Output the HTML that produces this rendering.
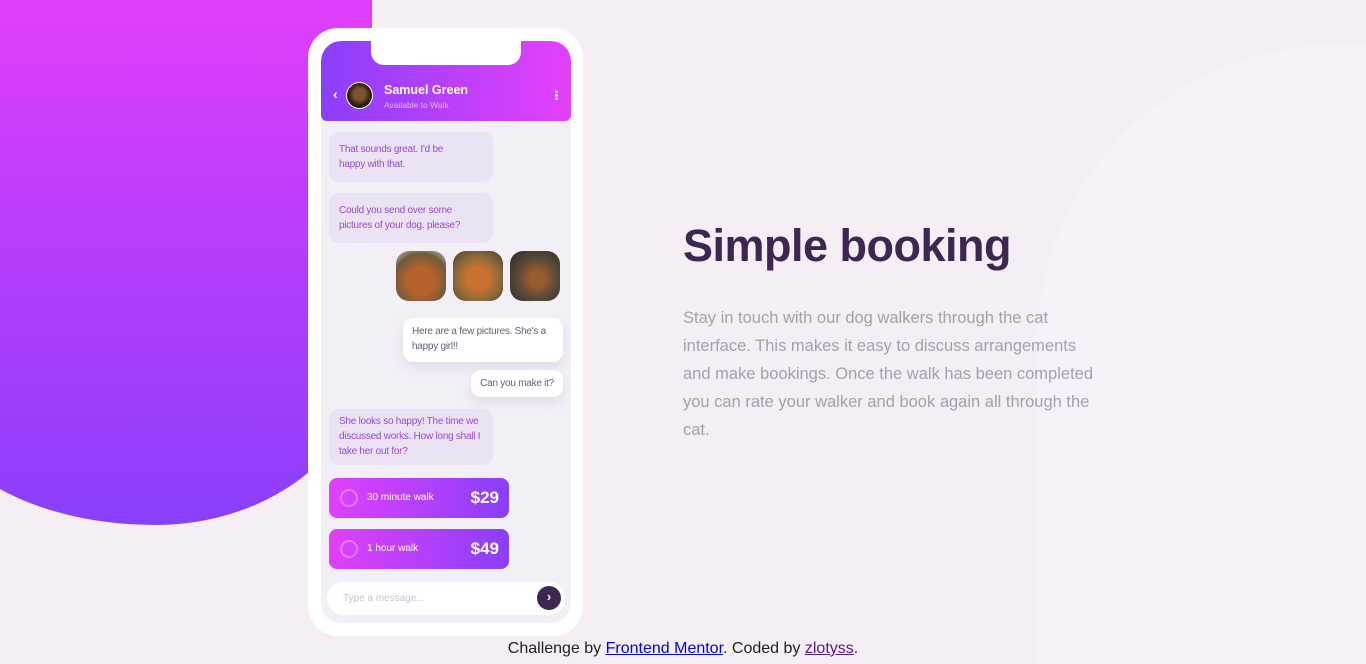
<!DOCTYPE html>
<html style="overflow:hidden;width:1366px;height:664px"><head><style>
*{margin:0;padding:0;box-sizing:border-box}
body{width:1366px;height:664px;overflow:hidden;background:#f5eef5;font-family:"Liberation Sans",sans-serif;position:relative}
.blob{position:absolute;left:-60px;top:-10px;width:432px;height:535px;background:linear-gradient(180deg,#e23ffb 0%,#b93dfc 45%,#8a3ffc 100%);border-radius:0 0 240px 240px/0 0 200px 130px}
.rblob{position:absolute;left:1037px;top:45px;width:329px;height:619px;background:#f7f2f9;border-top-left-radius:300px 300px}
.phone{position:absolute;left:308px;top:28px;width:275px;height:608px;background:#fff;border-radius:30px}
.screen{position:absolute;left:13px;top:13px;width:250px;height:582px;background:#f3eff7;border-radius:20px;overflow:hidden}
.head{height:80px;background:linear-gradient(90deg,#8a3ffc,#e540fc);position:relative;border-radius:20px 20px 6px 6px}
.notch{position:absolute;left:50px;top:0;width:150px;height:24px;background:#fff;border-radius:0 0 13px 13px}
.av{position:absolute;left:25px;top:41px;width:27px;height:27px;border-radius:50%;background:radial-gradient(circle at 50% 45%,#7a5530 0 30%,#2a1b12 60%);border:1.5px solid #fff}
.name{position:absolute;left:63px;top:42px;color:#fff;font-weight:bold;font-size:12.5px}
.sub{position:absolute;left:63px;top:59px;color:#e2b6fb;font-size:8.5px}
.back{position:absolute;left:12px;top:45px;color:#fff;font-size:14px;font-weight:bold}
.dots{position:absolute;right:13px;top:49px;width:3px;height:10px;background:radial-gradient(circle,#fff 1.3px,transparent 1.4px) 0 0/3px 3.5px}
.b{position:absolute;font-size:10px;line-height:15px;padding:10px 10px;border-radius:10px;letter-spacing:-.25px}
.l{left:8px;background:#ebe3f3;color:#9a4ad3;width:164px}
.r{right:8px;background:#fff;color:#665e78;box-shadow:0 5px 12px rgba(80,40,120,.1)}
.pic{position:absolute;top:210px;width:50px;height:50px;border-radius:13px}
.opt{position:absolute;left:8px;width:180px;height:40px;border-radius:8px;background:linear-gradient(90deg,#e040fb,#8a3ffc);color:#fff}
.opt .c{position:absolute;left:11px;top:11px;width:18px;height:18px;border-radius:50%;border:2px solid rgba(255,255,255,.3)}
.opt .t{position:absolute;left:38px;top:14px;font-size:10px}
.opt .p{position:absolute;right:10px;top:10px;font-size:17px;font-weight:bold}
.inp{position:absolute;left:6px;top:541px;width:238px;height:33px;background:#fff;border-radius:17px}
.inp span{position:absolute;left:16px;top:11px;font-size:10px;color:#c8c2d0}
.send{position:absolute;right:4px;top:4px;width:24px;height:24px;border-radius:50%;background:#3e2653;color:#fff;font-size:13px;text-align:center;line-height:22px;font-weight:bold}
h1{position:absolute;left:683px;top:220px;font-size:45px;color:#3e2653;font-weight:bold;letter-spacing:-.5px}
p.d{position:absolute;left:683px;top:304px;width:420px;font-size:16.5px;line-height:28px;color:#a59fb0}
.foot{position:absolute;left:0;width:1366px;top:640px;text-align:center;font-size:16px;color:#222}
.foot a{color:#0000ee;text-decoration:underline}.foot a.v{color:#551a8b}
</style></head><body>
<div class="rblob"></div>
<div class="blob"></div>
<div class="phone"><div class="screen">
<div class="head"><div class="notch"></div><div class="back">&#8249;</div><div class="av"></div><div class="name">Samuel Green</div><div class="sub">Available to Walk</div><div class="dots"></div></div>
<div class="b l" style="top:91px;padding-right:22px">That sounds great. I'd be happy with that.</div>
<div class="b l" style="top:152px;padding-right:14px">Could you send over some pictures of your dog. please?</div>
<div class="pic" style="left:75px;background:radial-gradient(circle at 50% 60%,#b5622c 0 35%,#6e5a3c 70%,#c9c6b8)"></div>
<div class="pic" style="left:132px;background:radial-gradient(circle at 50% 55%,#c8722f 0 30%,#8d6a3a 60%,#4a3a28)"></div>
<div class="pic" style="left:189px;background:radial-gradient(circle at 55% 55%,#9a5a30 0 20%,#5a4a3a 50%,#2e2a25)"></div>
<div class="b r" style="top:277px;width:160px;padding:6px 9px 8px">Here are a few pictures. She's a happy girl!!</div>
<div class="b r" style="top:329px;padding:6px 9px">Can you make it?</div>
<div class="b l" style="top:368px;padding:5px 12px 6px 10px">She looks so happy! The time we discussed works. How long shall I take her out for?</div>
<div class="opt" style="top:437px"><div class="c"></div><div class="t">30 minute walk</div><div class="p">$29</div></div>
<div class="opt" style="top:488px"><div class="c"></div><div class="t">1 hour walk</div><div class="p">$49</div></div>
<div class="inp"><span>Type a message...</span><div class="send">&#8250;</div></div>
</div></div>
<h1>Simple booking</h1>
<p class="d">Stay in touch with our dog walkers through the cat interface. This makes it easy to discuss arrangements and make bookings. Once the walk has been completed you can rate your walker and book again all through the cat.</p>
<div class="foot">Challenge by <a>Frontend Mentor</a>. Coded by <a class="v">zlotyss</a>.</div>
</body></html>
